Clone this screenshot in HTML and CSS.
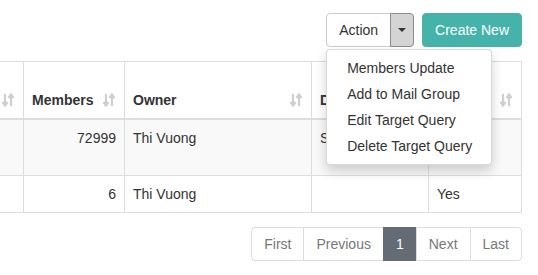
FILE: index.html
```html
<!DOCTYPE html>
<html>
<head>
<meta charset="utf-8">
<link rel="stylesheet" href="styles.css">
</head>
<body>
<div class="page">
  <div class="toolbar">
    <div class="btn-group">
      <button class="btn btn-default">Action</button>
      <button class="btn btn-default toggle"><span class="caret"></span></button>
      <ul class="dropdown">
        <li>Members Update</li>
        <li>Add to Mail Group</li>
        <li>Edit Target Query</li>
        <li>Delete Target Query</li>
      </ul>
    </div>
    <button class="btn btn-teal">Create New</button>
  </div>

  <div class="table-wrap">
    <table class="grid">
      <colgroup>
        <col class="c1"><col class="c2"><col class="c3"><col class="c4"><col class="c5">
      </colgroup>
      <thead>
        <tr>
          <th><div class="th"><span></span><svg class="sort" viewBox="0 0 12 14"><path d="M3 1v11M0.5 9l2.5 3.5L5.5 9M9 13V2M6.5 5L9 1.5 11.5 5"/></svg></div></th>
          <th><div class="th"><span>Members</span><svg class="sort" viewBox="0 0 12 14"><path d="M3 1v11M0.5 9l2.5 3.5L5.5 9M9 13V2M6.5 5L9 1.5 11.5 5"/></svg></div></th>
          <th><div class="th"><span>Owner</span><svg class="sort" viewBox="0 0 12 14"><path d="M3 1v11M0.5 9l2.5 3.5L5.5 9M9 13V2M6.5 5L9 1.5 11.5 5"/></svg></div></th>
          <th><div class="th"><span>Description</span><svg class="sort" viewBox="0 0 12 14"><path d="M3 1v11M0.5 9l2.5 3.5L5.5 9M9 13V2M6.5 5L9 1.5 11.5 5"/></svg></div></th>
          <th><div class="th"><span>Auto Update</span><svg class="sort" viewBox="0 0 12 14"><path d="M3 1v11M0.5 9l2.5 3.5L5.5 9M9 13V2M6.5 5L9 1.5 11.5 5"/></svg></div></th>
        </tr>
      </thead>
      <tbody>
        <tr class="odd">
          <td></td>
          <td class="num">72999</td>
          <td>Thi Vuong</td>
          <td>Sales</td>
          <td>Yes</td>
        </tr>
        <tr>
          <td></td>
          <td class="num">6</td>
          <td>Thi Vuong</td>
          <td></td>
          <td>Yes</td>
        </tr>
      </tbody>
    </table>
  </div>

  <ul class="pager">
    <li>First</li>
    <li>Previous</li>
    <li class="active">1</li>
    <li>Next</li>
    <li>Last</li>
  </ul>
</div>
</body>
</html>
```

FILE: styles.css
```css
* { box-sizing: border-box; }
html, body { margin: 0; padding: 0; background: #fff; }
body {
  font-family: "Liberation Sans", Arial, sans-serif;
  font-size: 14px;
  line-height: 20px;
  color: #333;
}
.page {
  padding: 13px 16px 0 0;
}
.toolbar {
  display: flex;
  justify-content: flex-end;
  gap: 8px;
}
.btn-group {
  position: relative;
  display: flex;
}
.btn {
  font: inherit;
  height: 34px;
  padding: 6px 12px;
  border: 1px solid #ccc;
  border-radius: 4px;
  background: #fff;
  color: #333;
  line-height: 20px;
  margin: 0;
}
.btn-group .btn:first-child {
  border-top-right-radius: 0;
  border-bottom-right-radius: 0;
}
.btn-group .toggle {
  margin-left: -1px;
  width: 24px;
  padding: 0;
  display: flex;
  align-items: center;
  justify-content: center;
  background: #d4d4d4;
  border-color: #8c8c8c;
  border-top-left-radius: 0;
  border-bottom-left-radius: 0;
}
.caret {
  width: 0;
  height: 0;
  border-top: 4px solid #333;
  border-left: 4px solid transparent;
  border-right: 4px solid transparent;
}
.btn-teal {
  background: #45b3a9;
  border-color: #45b3a9;
  color: #fff;
  padding: 6px 12px;
}
.dropdown {
  position: absolute;
  top: 36px;
  left: 0;
  z-index: 10;
  width: 166px;
  margin: 0;
  padding: 5px 0;
  list-style: none;
  background: #fff;
  border: 1px solid rgba(0,0,0,.15);
  border-radius: 4px;
  box-shadow: 0 6px 12px rgba(0,0,0,.175);
}
.dropdown li {
  padding: 3px 20px;
  white-space: nowrap;
  color: #333;
}
.table-wrap {
  margin-top: 14px;
  display: flex;
  justify-content: flex-end;
  overflow: hidden;
}
.grid {
  flex: none;
  table-layout: fixed;
  border-collapse: collapse;
  width: 619px;
}
.c1 { width: 121px; }
.c2 { width: 101px; }
.c3 { width: 187px; }
.c4 { width: 117px; }
.c5 { width: 93px; }
.grid th, .grid td {
  border: 1px solid #ddd;
  padding: 8px;
  text-align: left;
}
.grid th {
  vertical-align: bottom;
  border-bottom-width: 2px;
  font-weight: bold;
}
.grid td { vertical-align: top; }
.grid td.num { text-align: right; }
.grid tr.odd td { background: #f9f9f9; height: 56px; }
.th {
  display: flex;
  align-items: flex-end;
  justify-content: space-between;
  gap: 6px;
}
.th span { min-width: 0; }
.sort {
  flex: none;
  width: 12px;
  height: 14px;
  margin-bottom: 3px;
  margin-right: 1px;
  fill: none;
  stroke: #cfcfcf;
  stroke-width: 2.2;
}
.pager {
  display: flex;
  justify-content: flex-end;
  list-style: none;
  margin: 14px 0 0;
  padding: 0;
}
.pager li {
  padding: 6px 12px;
  line-height: 20px;
  border: 1px solid #ddd;
  margin-left: -1px;
  color: #777;
  background: #fff;
}
.pager li:first-child {
  border-radius: 4px 0 0 4px;
}
.pager li:last-child {
  border-radius: 0 4px 4px 0;
}
.pager li.active {
  background: #646b75;
  border-color: #646b75;
  color: #fff;
}
```
